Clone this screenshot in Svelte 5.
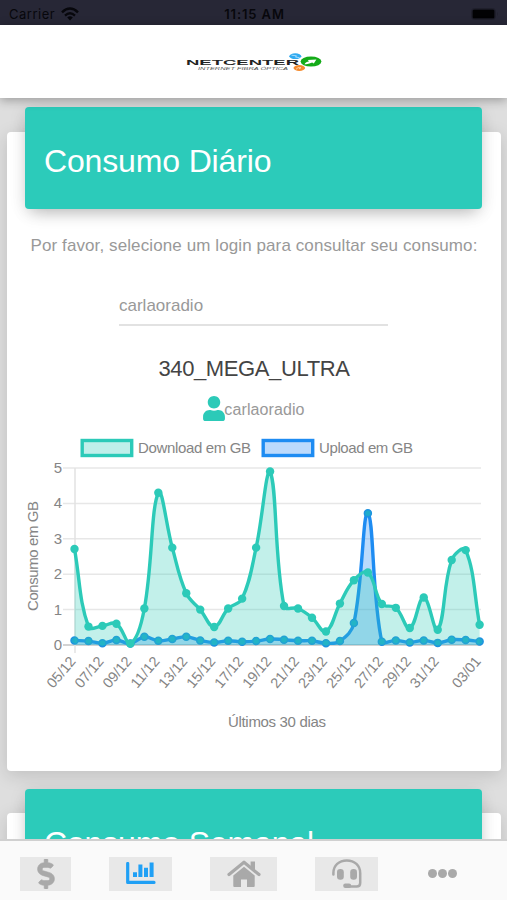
<script lang="ts">
    const download = [
        2.71, 0.52, 0.54, 0.6, 0.04, 1.03, 4.3, 2.75, 1.46, 1, 0.51, 1.03, 1.31, 2.75, 4.9,
        1.1, 1.03, 0.77, 0.38, 1.17, 1.83, 2.05, 1.16, 1.05, 0.48, 1.34, 0.43, 2.4, 2.68, 0.57,
    ];
    const upload = [
        0.13, 0.11, 0.05, 0.14, 0.04, 0.23, 0.12, 0.17, 0.23, 0.13, 0.07, 0.12, 0.09, 0.11, 0.17,
        0.15, 0.12, 0.12, 0.05, 0.11, 0.62, 3.72, 0.09, 0.13, 0.07, 0.13, 0.06, 0.15, 0.14, 0.1,
    ];
    const ticks = [
        [0, "05/12"], [2, "07/12"], [4, "09/12"], [6, "11/12"], [8, "13/12"],
        [10, "15/12"], [12, "17/12"], [14, "19/12"], [16, "21/12"], [18, "23/12"],
        [20, "25/12"], [22, "27/12"], [24, "29/12"], [26, "31/12"], [29, "03/01"],
    ] as [number, string][];

    const left = 67.5;
    const top = 33;
    const bottom = 210;
    const px = (i: number) => left + i * 13.97;
    const py = (v: number) => bottom - (v * (bottom - top)) / 5;
    const clamp = (y: number) => Math.min(bottom, Math.max(top, y));

    // cubic spline, tension 0.4
    function curve(values: number[]) {
        const pts = values.map((v, i) => ({ x: px(i), y: py(v) }));
        const handles = pts.map((p, i) => {
            const a = pts[i - 1] ?? p;
            const b = pts[i + 1] ?? p;
            const d0 = Math.hypot(p.x - a.x, p.y - a.y);
            const d1 = Math.hypot(b.x - p.x, b.y - p.y);
            const fa = (0.4 * d0) / (d0 + d1);
            const fb = (0.4 * d1) / (d0 + d1);
            return {
                inX: p.x - fa * (b.x - a.x),
                inY: clamp(p.y - fa * (b.y - a.y)),
                outX: p.x + fb * (b.x - a.x),
                outY: clamp(p.y + fb * (b.y - a.y)),
            };
        });
        let d = `M${pts[0].x},${pts[0].y}`;
        for (let i = 1; i < pts.length; i++) {
            const h = handles[i];
            const g = handles[i - 1];
            d += `C${g.outX},${g.outY} ${h.inX},${h.inY} ${pts[i].x},${pts[i].y}`;
        }
        return d;
    }

    const area = (values: number[]) => `${curve(values)}V${bottom}H${left}Z`;
</script>

<div class="screen">
    <div class="status">
        <span class="carrier">
            Carrier
            <svg width="18" height="14" viewBox="0 0 18 14" fill="none" stroke="#07070c">
                <path d="M1 5.3Q9-2.2 17 5.3" stroke-width="2.5" />
                <path d="M4 8.6Q9 4 14 8.6" stroke-width="2.3" />
                <path d="M6.2 10.4Q9 8.2 11.8 10.4L9 13.4Z" fill="#07070c" stroke="none" />
            </svg>
        </span>
        <strong>11:15 AM</strong>
        <svg class="battery" width="28" height="12" viewBox="0 0 28 12">
            <rect x="0.5" y="0.5" width="24" height="11" rx="3" fill="none" stroke="#1f1f2b" />
            <rect x="1.5" y="1.5" width="22" height="9" rx="1.5" fill="#020204" />
            <path d="M26 4v4q1.5-2 0-4" fill="#1f1f2b" />
        </svg>
    </div>

    <header>
        <svg width="138" height="20" viewBox="0 0 138 20">
            <text class="brand" x="1" y="12.6" textLength="113" lengthAdjust="spacingAndGlyphs">NETCENTER</text>
            <text class="slogan" x="13" y="18" textLength="90" lengthAdjust="spacingAndGlyphs">INTERNET FIBRA ÓPTICA</text>
            <ellipse cx="110.3" cy="4.2" rx="6" ry="2.9" fill="#2faaf0" />
            <path d="M106.5 3.2l5 .6-1 1.3 4 .5" fill="none" stroke="#bfe6ff" stroke-width=".8" />
            <ellipse cx="114.3" cy="16" rx="5.8" ry="2.9" fill="#f58a2c" />
            <path d="M111 17.3l2-1.6h3l-2 1.2" fill="none" stroke="#ffe1c4" stroke-width=".8" />
            <ellipse cx="126" cy="9.6" rx="10.4" ry="5" fill="#14ab18" />
            <path d="M119.5 12.2c1-2 2.5-2.4 4.5-2.6l-1.2-1.6 8.6-.6-2.6 4.2-1.6-1.2c-2 .5-3 1.8-7.7 1.8Z" fill="#fff" />
        </svg>
    </header>

    <main>
        <section class="card">
            <div class="banner"><h1>Consumo Diário</h1></div>
            <p class="hint">Por favor, selecione um login para consultar seu consumo:</p>
            <div class="select">carlaoradio</div>
            <h2>340_MEGA_ULTRA</h2>
            <p class="user">
                <svg width="22" height="25" viewBox="0 0 448 512">
                    <path fill="#2ccab8" d="M224 256c70.7 0 128-57.3 128-128S294.7 0 224 0 96 57.3 96 128s57.3 128 128 128zm89.6 32h-16.7c-22.2 10.2-46.9 16-72.9 16s-50.6-5.8-72.9-16h-16.7C60.2 288 0 348.2 0 422.4V464c0 26.5 21.5 48 48 48h352c26.5 0 48-21.5 48-48v-41.6c0-74.2-60.2-134.4-134.4-134.4z" />
                </svg>
                <span>carlaoradio</span>
            </p>

            <svg class="chart" width="494" height="305" viewBox="0 0 494 305">
                <rect x="75.2" y="5.5" width="49.5" height="15" fill="#c0efea" stroke="#2ccab8" stroke-width="3.4" />
                <text x="131" y="18" textLength="113">Download em GB</text>
                <rect x="256.2" y="5.5" width="49.5" height="15" fill="#bcdafc" stroke="#1e8cf2" stroke-width="3.4" />
                <text x="312" y="18" textLength="94">Upload em GB</text>

                {#each [0, 1, 2, 3, 4, 5] as v}
                    <line x1="56" x2="474" y1={py(v)} y2={py(v)} stroke={v ? "#e7e7e7" : "#c4c4c4"} stroke-width="1.5" />
                    <text x="55" y={py(v) + 5} text-anchor="end">{v}</text>
                {/each}
                <line x1="68" x2="68" y1={top} y2={bottom + 8} stroke="#e2e2e2" stroke-width="1.5" />

                <path d={area(upload)} fill="#1e88f5" fill-opacity="0.3" />
                <path d={curve(upload)} fill="none" stroke="#1e8cf2" stroke-width="3.4" />
                {#each upload as v, i}
                    <circle cx={px(i)} cy={py(v)} r="3.5" fill="#1fabcc" stroke="#1e93e0" stroke-width="1.5" />
                {/each}

                <path d={area(download)} fill="#2ccab8" fill-opacity="0.29" />
                <path d={curve(download)} fill="none" stroke="#2ccab8" stroke-width="3.4" />
                {#each download as v, i}
                    <circle cx={px(i)} cy={py(v)} r="4.2" fill="#2ccab8" />
                {/each}

                {#each ticks as [i, label]}
                    <text
                        class="tick"
                        text-anchor="end"
                        textLength="36"
                        transform="translate({px(i) + 2} 226.5) rotate(-50)">{label}</text>
                {/each}
                <text text-anchor="middle" textLength="110" transform="translate(31 121) rotate(-90)">Consumo em GB</text>
                <text x="270" y="292" text-anchor="middle" textLength="98">Últimos 30 dias</text>
            </svg>
        </section>

        <section class="card">
            <div class="banner"><h1>Consumo Semanal</h1></div>
        </section>
    </main>

    <nav>
        <button class="money" aria-label="Financeiro">
            <svg width="18" height="30" viewBox="0 0 288 512">
                <path fill="#a9a9a9" stroke="#a9a9a9" stroke-width="10" d="M209.2 233.4l-108-31.6C88.7 198.2 80 186.5 80 173.5c0-16.3 13.2-29.5 29.5-29.5h66.3c12.2 0 24.2 3.7 34.2 10.5 6.1 4.1 14.3 3.1 19.5-2l34.8-34c7.1-6.9 6.1-18.4-1.8-24.5C238 74.8 207.4 64.1 176 64V16c0-8.8-7.2-16-16-16h-32c-8.8 0-16 7.2-16 16v48h-2.5C45.8 64-5.4 118.7.5 183.6c4.2 46.1 39.4 83.6 83.8 96.6l102.5 30c12.5 3.7 21.2 15.3 21.2 28.3 0 16.3-13.2 29.5-29.5 29.5h-66.3C100 368 88 364.3 78 357.5c-6.1-4.1-14.3-3.1-19.5 2l-34.8 34c-7.1 6.9-6.1 18.4 1.8 24.5 24.5 19.2 55.1 29.9 86.5 30v48c0 8.8 7.2 16 16 16h32c8.8 0 16-7.2 16-16v-48.2c46.6-.9 90.3-28.6 105.7-72.7 21.5-61.6-14.6-124.8-72.5-141.7z" />
            </svg>
        </button>
        <button class="usage" aria-label="Consumo">
            <svg width="30" height="24" viewBox="0 0 30 24" fill="none" stroke="#20a0f5">
                <path d="M1.7 1.5V20.4H28" stroke-width="3.2" stroke-linecap="round" stroke-linejoin="round" />
                <path d="M9 15v-4.8M14.4 15V2.4M20 15V5.8M25.6 15V.5" stroke-width="4" />
            </svg>
        </button>
        <button class="home" aria-label="Início">
            <svg width="34" height="28" viewBox="0 0 34 28">
                <path d="M2 14.6L17 2.2L32 14.6" fill="none" stroke="#a9a9a9" stroke-width="3.2" stroke-linecap="round" stroke-linejoin="round" />
                <path d="M23.6 1.5H28V11L23.6 7.5Z" fill="#a9a9a9" />
                <path d="M6.3 15.6L17 6.8L27.7 15.6V26q0 1-1 1H20V19.4H14V27H7.3q-1 0-1-1Z" fill="#a9a9a9" />
            </svg>
        </button>
        <button class="support" aria-label="Suporte">
            <svg width="32" height="32" viewBox="0 0 32 32">
                <path d="M2.4 16.5V15C2.4 7.4 8 2.4 15.8 2.4S29.2 7.6 29.2 15V25Q29.2 28.6 25.6 28.6H16" fill="none" stroke="#a9a9a9" stroke-width="2.5" stroke-linecap="round" />
                <rect x="6" y="11" width="6.8" height="10.8" rx="3.2" fill="#a9a9a9" />
                <rect x="19.2" y="11" width="6.8" height="10.8" rx="3.2" fill="#a9a9a9" />
                <rect x="12.2" y="25.4" width="8" height="4.5" rx="2.2" fill="#a9a9a9" />
            </svg>
        </button>
        <button class="more" aria-label="Mais">
            <i></i><i></i><i></i>
        </button>
    </nav>
</div>

<style>
    :global(body) {
        margin: 0;
    }

    .screen {
        display: flex;
        flex-direction: column;
        width: 507px;
        height: 900px;
        overflow: hidden;
        background: #dedede;
        font-family: "Liberation Sans", Arial, sans-serif;
        color: #999;
    }

    .status {
        display: grid;
        grid-template-columns: 1fr auto 1fr;
        align-items: center;
        flex: none;
        height: 25px;
        padding: 2px 8px 0 9px;
        box-sizing: border-box;
        background: #272736;
        color: #07070c;
        font: 13px Inter, sans-serif;
    }

    .status strong {
        font-weight: 600;
        letter-spacing: 0.9px;
        margin-right: -1px;
    }

    .carrier {
        display: flex;
        align-items: center;
        gap: 6px;
        letter-spacing: 0.5px;
    }

    .battery {
        justify-self: end;
    }

    header {
        display: flex;
        justify-content: center;
        flex: none;
        height: 73px;
        padding: 27px 0 0;
        box-sizing: border-box;
        background: #fff;
        box-shadow: 0 2px 10px rgba(0, 0, 0, 0.32);
        z-index: 1;
    }

    .brand {
        font-size: 7px;
        font-weight: 700;
        fill: #222;
    }

    .slogan {
        font-size: 4px;
        font-style: italic;
        fill: #555;
    }

    main {
        flex: 1;
        min-height: 0;
        overflow: hidden;
        padding: 34px 6px 0 7px;
    }

    .card {
        display: flex;
        flex-direction: column;
        align-items: center;
        height: 639px;
        margin-bottom: 42px;
        border-radius: 4px;
        background: #fff;
        box-shadow: 0 4px 18px rgba(0, 0, 0, 0.14);
    }

    .banner {
        flex: none;
        width: 457px;
        height: 102px;
        margin: -25px 1px 0 0;
        padding: 34px 19px 0;
        box-sizing: border-box;
        border-radius: 4px;
        background: #2ccbba;
        box-shadow: 0 8px 16px -6px rgba(0, 0, 0, 0.26), 0 2px 18px rgba(0, 0, 0, 0.09);
    }

    .card + .card .banner {
        margin-top: -24px;
    }

    h1 {
        margin: 0;
        color: #fff;
        font-size: 32px;
        font-weight: 400;
        line-height: 40px;
        letter-spacing: -0.15px;
    }

    p {
        margin: 0;
    }

    .hint {
        margin-top: 26px;
        font-size: 17px;
        line-height: 22px;
        letter-spacing: 0.1px;
        white-space: nowrap;
    }

    .select {
        width: 269px;
        height: 32px;
        margin: 37px 1px 0 0;
        box-sizing: border-box;
        border-bottom: 2px solid #e2e2e2;
        font-size: 17px;
        line-height: 24px;
    }

    h2 {
        margin: 29px 0 0;
        color: #444;
        font-size: 22px;
        font-weight: 400;
        line-height: 28px;
        letter-spacing: -0.38px;
    }

    .user {
        display: flex;
        align-items: center;
        height: 26px;
        margin-top: 12px;
        font-size: 16px;
        letter-spacing: 0.1px;
    }

    .user span {
        margin: 3px 0 0 -1px;
    }

    .chart {
        flex: none;
        margin-top: 14px;
    }

    .chart text {
        fill: #858585;
        font-size: 15px;
    }

    .chart .tick {
        font-size: 14.4px;
    }

    nav {
        display: flex;
        align-items: flex-start;
        flex: none;
        height: 61px;
        padding: 16px 20px 0;
        box-sizing: border-box;
        border-top: 2px solid #d0d0d0;
        background: #fafafa;
        z-index: 1;
    }

    button {
        display: flex;
        align-items: center;
        justify-content: center;
        height: 34px;
        padding: 0;
        border: 0;
        background: #e8e8e8;
    }

    .money {
        width: 51px;
    }

    .usage {
        width: 63px;
        margin-left: 38px;
    }

    .home {
        width: 67px;
        margin-left: 38px;
    }

    .support {
        width: 63px;
        margin-left: 38px;
    }

    .more {
        gap: 1px;
        margin-left: 50px;
        padding-bottom: 2px;
        box-sizing: border-box;
        background: none;
    }

    .more i {
        width: 9px;
        height: 9px;
        border-radius: 50%;
        background: #a9a9a9;
    }
</style>
